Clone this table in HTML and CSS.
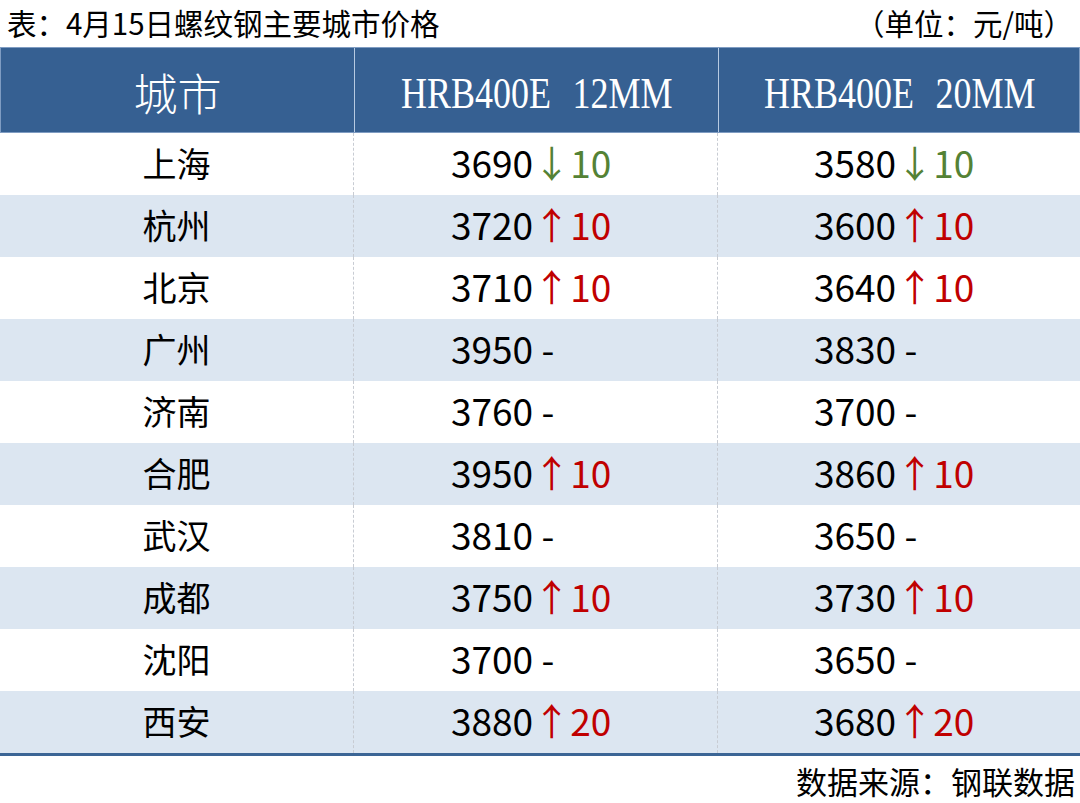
FILE: index.html
```html
<!DOCTYPE html>
<html lang="zh">
<head>
<meta charset="utf-8">
<link rel="stylesheet" href="styles.css">
</head>
<body>
<div class="page">
  <div class="title-row">
    <span class="title">表：4月15日螺纹钢主要城市价格</span>
    <span class="unit">（单位：元/吨）</span>
  </div>
  <div class="table">
    <div class="row head">
      <div class="cell city"><span class="hcn">城市</span></div>
      <div class="cell spec"><span class="hen">HRB400E 12MM</span></div>
      <div class="cell spec"><span class="hen">HRB400E 20MM</span></div>
    </div>
    <div class="row">
      <div class="cell city">上海</div>
      <div class="cell price">3690<span class="down">↓10</span></div>
      <div class="cell price">3580<span class="down">↓10</span></div>
    </div>
    <div class="row alt">
      <div class="cell city">杭州</div>
      <div class="cell price">3720<span class="up">↑10</span></div>
      <div class="cell price">3600<span class="up">↑10</span></div>
    </div>
    <div class="row">
      <div class="cell city">北京</div>
      <div class="cell price">3710<span class="up">↑10</span></div>
      <div class="cell price">3640<span class="up">↑10</span></div>
    </div>
    <div class="row alt">
      <div class="cell city">广州</div>
      <div class="cell price">3950 -</div>
      <div class="cell price">3830 -</div>
    </div>
    <div class="row">
      <div class="cell city">济南</div>
      <div class="cell price">3760 -</div>
      <div class="cell price">3700 -</div>
    </div>
    <div class="row alt">
      <div class="cell city">合肥</div>
      <div class="cell price">3950<span class="up">↑10</span></div>
      <div class="cell price">3860<span class="up">↑10</span></div>
    </div>
    <div class="row">
      <div class="cell city">武汉</div>
      <div class="cell price">3810 -</div>
      <div class="cell price">3650 -</div>
    </div>
    <div class="row alt">
      <div class="cell city">成都</div>
      <div class="cell price">3750<span class="up">↑10</span></div>
      <div class="cell price">3730<span class="up">↑10</span></div>
    </div>
    <div class="row">
      <div class="cell city">沈阳</div>
      <div class="cell price">3700 -</div>
      <div class="cell price">3650 -</div>
    </div>
    <div class="row alt last">
      <div class="cell city">西安</div>
      <div class="cell price">3880<span class="up">↑20</span></div>
      <div class="cell price">3680<span class="up">↑20</span></div>
    </div>
  </div>
  <div class="source">数据来源：钢联数据</div>
</div>
</body>
</html>
```

FILE: styles.css
```css
* { box-sizing: border-box; }
html, body {
  margin: 0;
  padding: 0;
  background: #ffffff;
}
body {
  font-family: "Noto Sans CJK SC", "Noto Sans", sans-serif;
  color: #000;
}
.page {
  width: 1080px;
}
.title-row {
  height: 47px;
  display: flex;
  justify-content: space-between;
  align-items: center;
  padding: 0 7px 2px 7px;
  font-size: 29.5px;
  line-height: 1;
}
.table {
  display: flex;
  flex-direction: column;
}
.row {
  display: grid;
  grid-template-columns: 353px 364px 363px;
  height: 62px;
}
.row.alt {
  background: #dce6f1;
}
.row.last {
  border-bottom: 3px solid #3b6595;
  height: 65px;
}
.row.head {
  height: 86px;
  background: #366092;
  color: #fff;
  border: 1px solid #7f9cc2;
}
.cell {
  display: flex;
  align-items: center;
  line-height: 1;
}
.row .cell + .cell {
  border-left: 1px dashed #c8ccd3;
}
.row.head .cell + .cell {
  border-left: 1px solid #b7cae2;
}
.row.last .cell {
  padding-bottom: 3px;
}
.city {
  justify-content: center;
  font-size: 34px;
  padding-bottom: 3px;
}
.head .city {
  padding-top: 6px;
}
.hcn {
  font-size: 44px;
  font-weight: 300;
}
.spec {
  justify-content: center;
  padding-top: 6px;
}
.hen {
  display: inline-block;
  font-family: "Liberation Serif", "Times New Roman", serif;
  font-size: 45px;
  word-spacing: 0.35em;
  transform: scaleX(0.8);
  white-space: nowrap;
}
.price {
  padding-left: 97px;
  font-size: 37px;
  padding-bottom: 3px;
  white-space: nowrap;
}
.row .price:nth-child(3) {
  padding-left: 96px;
}
.up {
  color: #c00000;
}
.down {
  color: #548235;
}
.source {
  display: flex;
  justify-content: flex-end;
  align-items: center;
  height: 48px;
  padding: 0 5px 0 0;
  font-size: 31px;
  line-height: 1;
}
```
